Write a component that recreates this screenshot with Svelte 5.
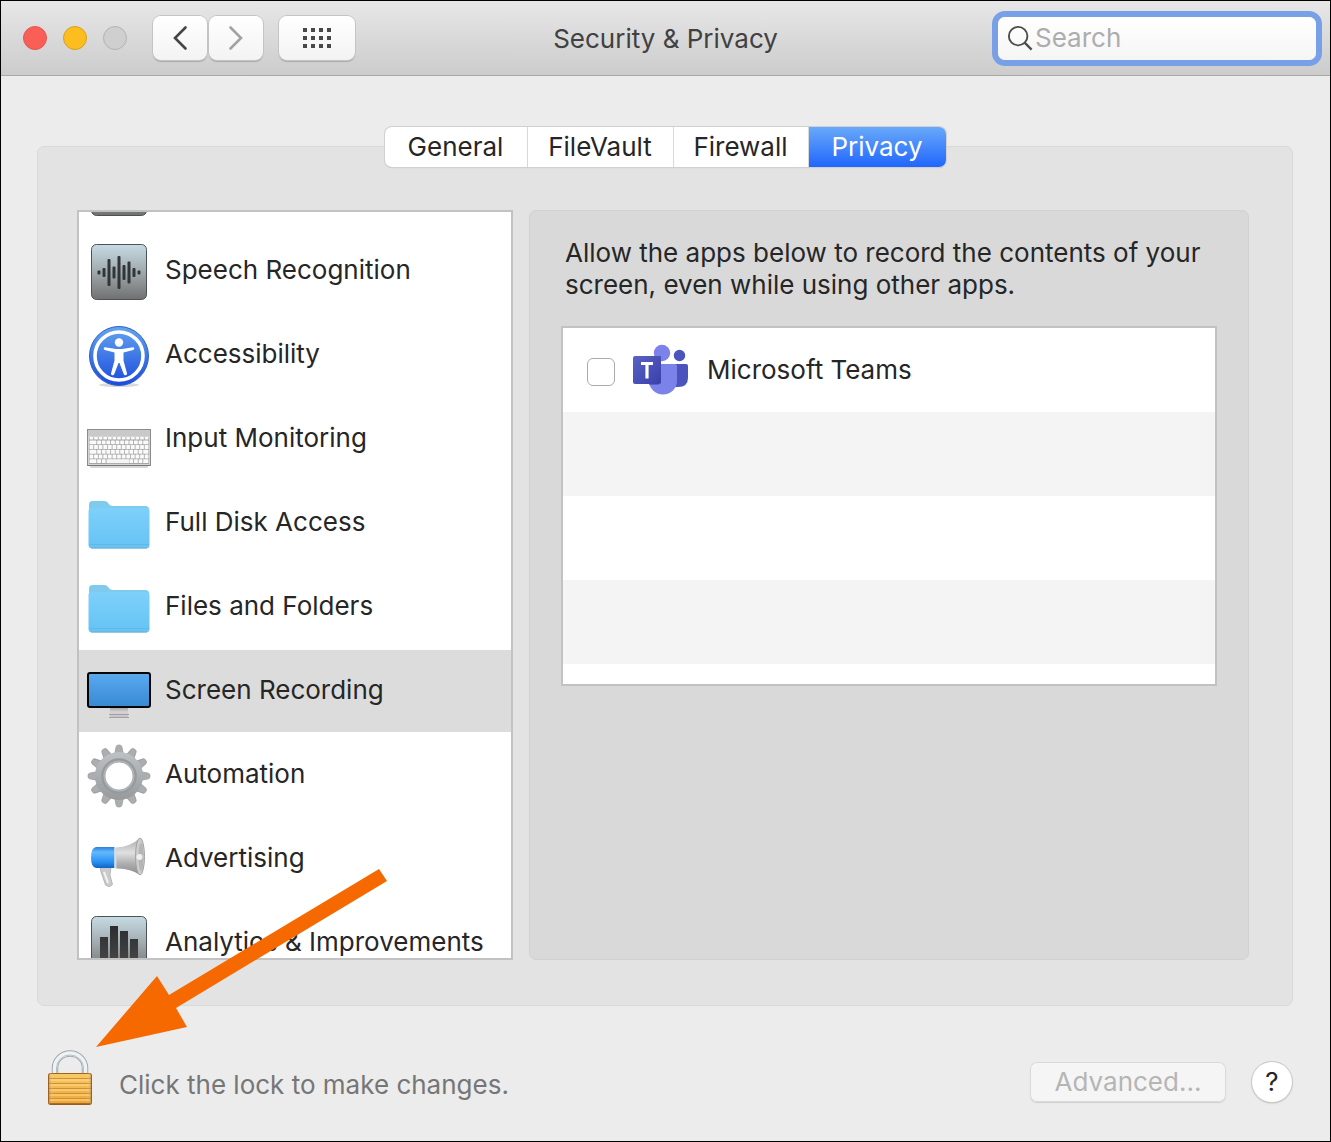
<script>
  const tabs = ['General', 'FileVault', 'Firewall', 'Privacy'];
  let activeTab = $state('Privacy');

  const services = [
    { label: '', icon: 'tile' },
    { label: 'Speech Recognition', icon: 'speech' },
    { label: 'Accessibility', icon: 'accessibility' },
    { label: 'Input Monitoring', icon: 'keyboard' },
    { label: 'Full Disk Access', icon: 'folder' },
    { label: 'Files and Folders', icon: 'folder' },
    { label: 'Screen Recording', icon: 'display' },
    { label: 'Automation', icon: 'gear' },
    { label: 'Advertising', icon: 'megaphone' },
    { label: 'Analytics & Improvements', icon: 'chart' }
  ];
  let selected = $state('Screen Recording');
  let teamsAllowed = $state(false);
  let query = $state('');

  const wave = [
    [9, 4], [14, 9], [19, 27], [24, 12], [29, 33], [34, 15], [39, 22], [44, 9], [49, 4]
  ];
  const keyRows = [0, 1, 2, 3, 4, 5];
  const keyCols = [0, 1, 2, 3, 4, 5, 6, 7, 8, 9, 10, 11, 12];
  const teeth = Array.from({ length: 12 }, (_, i) => i * 30);
</script>

{#snippet tile()}
  <rect x="4.5" y="14.5" width="55" height="55" rx="5" fill="url(#tileFill)" stroke="#4b5357" />
{/snippet}

<svg class="defs" aria-hidden="true">
  <defs>
    <linearGradient id="tileFill" x2="0" y2="1"><stop stop-color="#c6dbe4" /><stop offset=".5" stop-color="#a0a9ac" /><stop offset="1" stop-color="#707070" /></linearGradient>
    <linearGradient id="blueDisc" x2="0" y2="1"><stop stop-color="#62a5ee" /><stop offset=".5" stop-color="#3f78e6" /><stop offset="1" stop-color="#1d49dc" /></linearGradient>
    <linearGradient id="folderFill" x2="0" y2="1"><stop stop-color="#7dd0fa" /><stop offset="1" stop-color="#66c3f5" /></linearGradient>
    <linearGradient id="screenFill" x2="0" y2="1"><stop stop-color="#5aaaf0" /><stop offset="1" stop-color="#3789d2" /></linearGradient>
    <linearGradient id="standFill" x2="0" y2="1"><stop stop-color="#a0a0a0" /><stop offset=".5" stop-color="#d4d4d4" /><stop offset="1" stop-color="#c4c4c4" /></linearGradient>
    <linearGradient id="gearFill" gradientUnits="userSpaceOnUse" x1="0" x2="0" y1="11" y2="73"><stop stop-color="#c3c7c9" /><stop offset="1" stop-color="#929496" /></linearGradient>
    <linearGradient id="hornBlue" x2="0" y2="1"><stop stop-color="#2f7fd6" /><stop offset=".25" stop-color="#62bafc" /><stop offset=".7" stop-color="#2a91f2" /><stop offset="1" stop-color="#1262c4" /></linearGradient>
    <linearGradient id="hornGrey" x2="0" y2="1"><stop stop-color="#a8a8a8" /><stop offset=".4" stop-color="#e0e0e0" /><stop offset=".7" stop-color="#adadad" /><stop offset="1" stop-color="#8a8a8a" /></linearGradient>
    <linearGradient id="barFill" x2="0" y2="1"><stop stop-color="#2b2d2f" /><stop offset="1" stop-color="#4a4a4a" /></linearGradient>
    <linearGradient id="brass" x2="0" y2="1"><stop stop-color="#f9ca69" /><stop offset="1" stop-color="#eca437" /></linearGradient>
    <linearGradient id="brassSide"><stop stop-color="#8a4e0c" stop-opacity=".55" /><stop offset=".12" stop-color="#fff" stop-opacity="0" /><stop offset=".88" stop-color="#fff" stop-opacity="0" /><stop offset="1" stop-color="#8a4e0c" stop-opacity=".55" /></linearGradient>
    <linearGradient id="teamsTile" x2="1" y2="1"><stop stop-color="#5a62c3" /><stop offset="1" stop-color="#3940ab" /></linearGradient>
  </defs>
</svg>

<div class="window">
  <header class="toolbar">
    <div class="controls">
      <div class="lights">
        <button class="light red" aria-label="Close"></button>
        <button class="light yellow" aria-label="Minimize"></button>
        <button class="light grey" aria-label="Zoom" disabled></button>
      </div>
      <div class="nav">
        <button class="tool" aria-label="Back">
          <svg width="16" height="26" viewBox="0 0 16 26"><path d="M13.5 2.5 3 13l10.500 10.500" fill="none" stroke="#454545" stroke-width="2.600" stroke-linecap="round" /></svg>
        </button>
        <button class="tool" aria-label="Forward">
          <svg width="16" height="26" viewBox="0 0 16 26"><path d="M2.500 2.500 13 13 2.500 23.500" fill="none" stroke="#a2a2a2" stroke-width="2.600" stroke-linecap="round" /></svg>
        </button>
      </div>
      <button class="tool wide" aria-label="Show all">
        <svg width="28" height="20" viewBox="0 0 28 20" fill="#484848">
          {#each [0, 8, 16] as y}{#each [0, 8, 16, 24] as x}<rect {x} {y} width="4" height="4" />{/each}{/each}
        </svg>
      </button>
    </div>
    <h1>Security &amp; Privacy</h1>
    <label class="search">
      <svg width="26" height="26" viewBox="0 0 28 28" fill="none" stroke="#4b4b4b" stroke-width="2"><circle cx="12" cy="12" r="10" /><path d="m19 19 7.500 7.500" stroke-width="2.400" /></svg>
      <input type="text" placeholder="Search" aria-label="Search" bind:value={query} />
    </label>
  </header>

  <main>
    <div class="tabs" role="tablist">
      {#each tabs as tab}
        <button role="tab" class:active={activeTab === tab} aria-selected={activeTab === tab} onclick={() => (activeTab = tab)}>{tab}</button>
      {/each}
    </div>

    <section class="panel">
      <div class="services">
        <ul>
          {#each services as item}
            <li>
              <button class="service" class:selected={item.label === selected} onclick={() => (selected = item.label)} aria-label={item.label ? undefined : 'Previous'}>
                <svg width="64" height="84" viewBox="0 0 64 84" aria-hidden="true">
                  {#if item.icon === 'tile'}
                    {@render tile()}
                  {:else if item.icon === 'speech'}
                    {@render tile()}
                    {#each wave as [x, h]}
                      <rect x={x + 1.500} y={42.500 - h / 2} width="3" height={h} rx="1" fill="#30363a" />
                    {/each}
                  {:else if item.icon === 'accessibility'}
                    <ellipse cx="32" cy="71" rx="20" ry="2" fill="#000" opacity=".15" />
                    <circle cx="32" cy="42" r="29.500" fill="url(#blueDisc)" stroke="#2f62c4" />
                    <circle cx="32" cy="42" r="24" fill="none" stroke="#fff" stroke-width="3.600" />
                    <circle cx="32" cy="28.500" r="4.200" fill="#fff" />
                    <path d="M18 33.200 29 35h6l11-1.800c1.500 0 1.800 2.300.300 2.700L36.500 38.500v8l3.500 13c.300 1.800-2.500 2.500-3.200.800L32.500 49h-1l-4.300 11.300c-.700 1.700-3.500 1-3.200-.800l3.500-13v-8L17.700 35.900c-1.500-.400-1.200-2.700.300-2.700Z" fill="#fff" />
                  {:else if item.icon === 'keyboard'}
                    <rect x="3" y="67" width="58" height="3" rx="1.500" fill="#000" opacity=".16" />
                    <rect x=".5" y="31.500" width="63" height="36" fill="#d4d4d4" stroke="#8b8b8b" />
                    <rect x="1" y="32" width="62" height="6" fill="#c9c9c9" />
                    <rect x="2" y="39" width="60" height="27" fill="#a6a6a6" />
                    {#each keyRows as r}
                      {#each keyCols as c}
                        {#if !(r === 5 && c > 3 && c < 9)}
                          <rect x={2.500 + c * 4.600 - (r % 2 && c ? 1.500 : 0)} y={r ? 37.700 + r * 4.700 : 39} width={c === 12 && r % 2 ? 5.200 : 3.800} height={r ? 3.900 : 2.500} rx=".5" fill="#fafafa" />
                        {/if}
                      {/each}
                    {/each}
                    <rect x="19.500" y="61.200" width="22.500" height="3.900" fill="#f5f5f5" />
                    <path d="M1 67.500h62" stroke="#777" />
                  {:else if item.icon === 'folder'}
                    <path d="M2 28V22.500a3.500 3.500 0 0 1 3.500-3.500H17c5 0 4 5 9 5h32.500a3.500 3.500 0 0 1 3.500 3.500v36a3 3 0 0 1-3 3H5a3 3 0 0 1-3-3Z" fill="#7fcbee" />
                    <path d="M1.500 29a3 3 0 0 1 3-3h55a3 3 0 0 1 3 3v34a3 3 0 0 1-3 3h-55a3 3 0 0 1-3-3Z" fill="url(#folderFill)" />
                    <path d="M2 62.500h60" stroke="#5fb8e6" />
                    <path d="M4 66h56" stroke="#6fb0d0" />
                  {:else if item.icon === 'display'}
                    <path d="M23 57h18v10H23Z" fill="url(#standFill)" />
                    <path d="M22 64.500h20M22 67.500h20" stroke="#a6a0a6" />
                    <rect x="1" y="23" width="62" height="34" rx="2" fill="url(#screenFill)" stroke="#050505" stroke-width="2" />
                  {:else if item.icon === 'gear'}
                    {#each teeth as angle}
                      <path d="M27.500 21 29.200 12.500Q29.500 11 32 11T34.800 12.500L36.500 21Z" fill="#abaeb0" stroke="#909294" stroke-width=".7" transform="rotate({angle} 32 42)" />
                    {/each}
                    <circle cx="32" cy="42" r="19" fill="none" stroke="url(#gearFill)" stroke-width="10" />
                    <circle cx="32" cy="42" r="16.500" fill="none" stroke="#969a9d" stroke-width="2.500" />
                    <circle cx="32" cy="42" r="14.500" fill="none" stroke="#afb3b6" stroke-width="2" />
                  {:else if item.icon === 'megaphone'}
                    <path d="M13 49h11l-1 8 2.500 9.500q-3 3.500-7 .5L14 54Z" fill="#cbcbcb" stroke="#a2a2a2" stroke-width=".7" />
                    <path d="M17 54 21 65" stroke="#f3f3f3" stroke-width="2" />
                    <path d="M29 29.500Q43 29 53 20V57Q43 50 29 50.500Z" fill="url(#hornGrey)" />
                    <ellipse cx="53" cy="38.500" rx="4.500" ry="18.500" fill="#cdcdcd" stroke="#a2a2a2" />
                    <ellipse cx="54" cy="39" rx="2.500" ry="14" fill="#b5b5b5" />
                    <circle cx="52.500" cy="39" r="3" fill="#f0f0f0" />
                    <path d="M9 29h18.500v21H9q-5-1-5-10.500T9 29Z" fill="url(#hornBlue)" />
                    <path d="M28.500 29.500v20.500" stroke="#d5dbe0" stroke-width="2" />
                  {:else if item.icon === 'chart'}
                    {@render tile()}
                    <path d="M13 35h8v31h-8ZM23 24h8v42h-8ZM33 29h8v37h-8ZM43 37h8v29h-8Z" fill="url(#barFill)" />
                  {/if}
                </svg>
                <span>{item.label}</span>
              </button>
            </li>
          {/each}
        </ul>
      </div>

      <div class="detail">
        <p>Allow the apps below to record the contents of your screen, even while using other apps.</p>
        <ul class="apps">
          <li>
            <label>
              <input type="checkbox" bind:checked={teamsAllowed} />
              <svg width="58" height="52" viewBox="0 0 58 52" aria-hidden="true">
                <path d="M38 20h16a2 2 0 0 1 2 2v12q0 9-10 9h-8Z" fill="#4b53bc" />
                <circle cx="47.500" cy="11.500" r="5.700" fill="#4b53bc" />
                <circle cx="30" cy="9" r="8.200" fill="#7b83eb" />
                <path d="M19 20h24a2 2 0 0 1 2 2v15a14 13.500 0 0 1-28 0V22Z" fill="#7b83eb" />
                <path d="M17 12h12v23q0 6-4 6h-8Z" fill="#4046a6" opacity=".55" />
                <rect x="1" y="12" width="28" height="28" rx="2" fill="url(#teamsTile)" />
                <path d="M9 19.500h12M15 19.500v15" stroke="#fff" stroke-width="3.200" />
              </svg>
              <span>Microsoft Teams</span>
            </label>
          </li>
          <li></li>
          <li></li>
          <li></li>
        </ul>
      </div>
    </section>

    <footer>
      <button class="lock">
        <svg width="46" height="56" viewBox="0 0 46 56" aria-hidden="true">
          <path d="M8 25V18a15 14.500 0 0 1 30 0v7" fill="none" stroke="#a1a7ac" stroke-width="6.500" />
          <path d="M8 25V18a15 14.500 0 0 1 30 0v7" fill="none" stroke="#edf2f5" stroke-width="4.500" />
          <path d="M9.500 25V18a13.500 13 0 0 1 27 0v7" fill="none" stroke="#b9c1c7" />
          <rect x="1.500" y="23.500" width="43" height="31" rx="2" fill="url(#brass)" stroke="#a1641a" />
          <path d="M2 28.500h42M2 33.500h42M2 38.500h42M2 43.500h42M2 48.500h42" stroke="#cf8f35" />
          <path d="M2 30h42M2 35h42M2 40h42M2 45h42M2 50h42" stroke="#ffdc87" />
          <rect x="1" y="23" width="44" height="32" rx="2" fill="url(#brassSide)" />
          <path d="M3 54h40" stroke="#98571b" stroke-width="1.500" />
        </svg>
        <span>Click the lock to make changes.</span>
      </button>
      <div class="actions">
        <button class="advanced" disabled>Advanced...</button>
        <button class="help" aria-label="Help">?</button>
      </div>
      <svg class="arrow" width="292" height="180" viewBox="0 0 292 180" aria-hidden="true">
        <path d="M0 179 61 108 73 127 283 1 291 13 80 140 91 159Z" fill="#f66900" />
      </svg>
    </footer>
  </main>
</div>

<style>
  :global(body) { margin: 0; }
  * { box-sizing: border-box; }
  button, input { font: inherit; color: inherit; margin: 0; padding: 0; border: 0; background: none; }
  ul { list-style: none; margin: 0; padding: 0; }
  svg { display: block; flex: none; }
  .defs { position: absolute; width: 0; height: 0; }

  .window {
    display: flex;
    flex-direction: column;
    height: 100vh;
    min-height: 800px;
    border: 1px solid #000;
    background: #ececec;
    color: #262626;
    font: 26px/32px Inter, "Liberation Sans", sans-serif;
  }

  .toolbar {
    display: grid;
    grid-template-columns: 1fr auto 1fr;
    align-items: center;
    flex: none;
    height: 75px;
    padding: 0 14px 0 22px;
    border-bottom: 1px solid #a9a9a9;
    background: linear-gradient(#e7e7e7, #cccccc);
  }
  .controls { display: flex; align-items: center; gap: 16px; }
  .lights { display: flex; gap: 16px; margin-right: 10px; }
  .light { width: 24px; height: 24px; border-radius: 50%; border: 1px solid #dd5850; background: #f95f57; }
  .yellow { background: #fcbd1e; border-color: #d79f26; }
  .grey { background: #cfcfcf; border-color: #b3b3b3; }
  .nav { display: flex; gap: 2px; }
  .tool {
    display: grid;
    place-items: center;
    width: 54px;
    height: 44px;
    border-radius: 8px;
    background: linear-gradient(#fff, #f3f3f3);
    box-shadow: 0 0 0 1px #c4c4c4, 0 2px 1px #aaaaaa;
  }
  .wide { width: 76px; }
  h1 { margin: 0; padding: 2px 8px 0 0; font-size: 26px; line-height: 32px; font-weight: 400; color: #414141; }
  .search {
    justify-self: end;
    display: flex;
    align-items: center;
    gap: 2px;
    width: 318px;
    height: 43px;
    padding-left: 9px;
    border-radius: 7px;
    background: linear-gradient(#fff, #f5f5f5);
    box-shadow: 0 0 0 6px #78a0e6;
  }
  .search input { flex: 1; min-width: 0; outline: 0; }
  .search input::placeholder { color: #adadad; opacity: 1; }

  main { flex: 1; min-height: 0; display: flex; flex-direction: column; padding: 51px 37px 0 36px; }
  .tabs {
    position: relative;
    z-index: 1;
    align-self: center;
    display: grid;
    grid-template-columns: 143px 146px 135px 137px;
    flex: none;
    height: 40px;
    border-radius: 7px;
    background: #fff;
    box-shadow: 0 0 0 1px #d0d0d0, 0 1px 1px #b8b8b8;
  }
  .tabs button { border-right: 1px solid #d8d8d8; }
  .tabs .active {
    border: 0;
    border-radius: 0 7px 7px 0;
    background: linear-gradient(#69a9fa, #2066fb);
    color: #fff;
  }

  .panel {
    flex: 1;
    min-height: 0;
    display: grid;
    grid-template-columns: 436fr 720fr;
    grid-template-rows: minmax(0, 1fr);
    gap: 16px;
    margin-top: -21px;
    padding: 63px 43px 45px 39px;
    border: 1px solid #d9d9d9;
    border-radius: 7px;
    background: #e3e3e3;
  }
  .services { overflow: hidden; border: 2px solid #c2c2c2; background: #fff; }
  .services ul { margin-top: -66px; }
  .services li { height: 84px; }
  .service {
    display: flex;
    align-items: flex-start;
    gap: 14px;
    width: 100%;
    height: 82px;
    padding-left: 8px;
    text-align: left;
    white-space: nowrap;
  }
  .service span { padding-top: 24px; }
  .selected { background: #dcdcdc; }

  .detail { padding: 26px 31px; border: 1px solid #d2d2d2; border-radius: 7px; background: #d9d9d9; }
  .detail p { margin: 0 0 25px; padding-left: 4px; }
  .apps { border: 2px solid #c2c2c2; background: #fff; padding-bottom: 20px; }
  .apps li { height: 84px; }
  .apps li:nth-child(even) { background: #f4f4f4; }
  .apps label { display: flex; align-items: center; height: 100%; padding-left: 24px; }
  .apps input { appearance: none; width: 28px; height: 28px; margin: 4px 17px 0 0; border: 1px solid #aaa; border-radius: 6px; background: #fff; }
  .apps input:checked { background: #2f73fa; }
  .apps label span { margin-left: 17px; }

  footer {
    position: relative;
    display: flex;
    align-items: center;
    justify-content: space-between;
    flex: none;
    height: 135px;
    padding: 16px 1px 0 10px;
  }
  .lock { display: flex; align-items: center; gap: 26px; padding-bottom: 8px; color: #767676; }
  .lock span { padding-top: 14px; }
  .actions { display: flex; align-items: center; gap: 26px; }
  .advanced { width: 196px; height: 40px; border-radius: 7px; background: #f5f5f5; color: #b5b5b5; box-shadow: inset 0 0 0 1px #dadada, 0 1px 1px #d0d0d0; }
  .help { width: 40px; height: 40px; border-radius: 50%; background: #fff; box-shadow: 0 0 0 1px #c9c9c9, 0 1px 2px #aaa; }
  .arrow { position: absolute; left: 59px; bottom: 93px; pointer-events: none; }
</style>
